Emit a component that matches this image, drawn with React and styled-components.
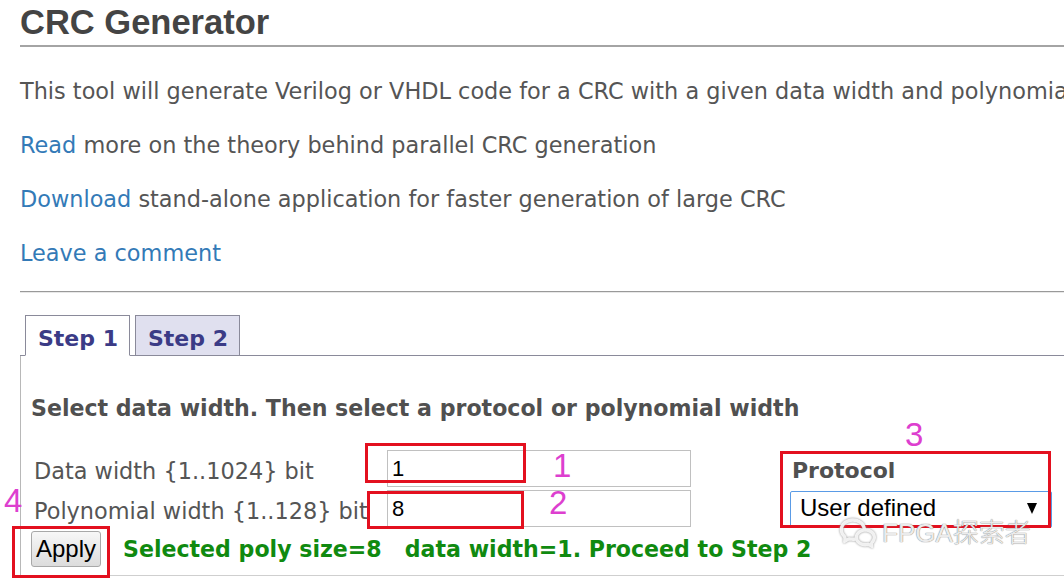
import React from "react";
import styled, { createGlobalStyle } from "styled-components";
import { RiWechatLine } from "react-icons/ri";

const GlobalStyle = createGlobalStyle`
  html, body { margin: 0; padding: 0; background: #fff; overflow: hidden; }
  body { font-family: "DejaVu Sans", Verdana, sans-serif; }
  * { box-sizing: border-box; }
`;

const VERDANA = `"DejaVu Sans", Verdana, sans-serif`;
const ARIAL = `"Liberation Sans", Arial, sans-serif`;

const Page = styled.div`
  position: relative;
  width: 1400px;
  height: 579px;
  padding: 2px 0 0 20px;
  color: #555;
  font-family: ${VERDANA};
`;

const Title = styled.h1`
  margin: 0;
  font: bold 34.5px/40px ${ARIAL};
  color: #444;
  padding: 0 0 3px 0;
  border-bottom: 2px solid #a4a4a4;
`;

const Intro = styled.div`
  display: flex;
  flex-direction: column;
  gap: 30px;
  margin-top: 32px;
`;

const Para = styled.p`
  margin: 0;
  font-size: 22.4px;
  line-height: 24px;
  white-space: nowrap;
  color: #555;
`;

const Link = styled.a`
  color: #337ab7;
  text-decoration: none;
`;

const Rule = styled.hr`
  margin: 26px 0 0 0;
  height: 0;
  border: none;
  border-top: 1px solid #999;
  border-bottom: 1px solid #e8e8e8;
`;

const TabBar = styled.div`
  display: flex;
  gap: 5px;
  margin-top: 22px;
  padding-left: 5px;
  border-bottom: 1px solid #8a8a9a;
`;

const Tab = styled.div`
  height: 41px;
  margin-bottom: -1px;
  padding: 10px 11px 0 12px;
  font: bold 22px/26px ${VERDANA};
  color: #3b3b86;
  border: 1px solid #8a8a9a;
  border-bottom: 1px solid ${(p) => (p.$active ? "#fff" : "#8a8a9a")};
  background: ${(p) => (p.$active ? "#fff" : "#e0e0ef")};
`;

const Panel = styled.div`
  border-left: 1px solid #b8b8b8;
  border-bottom: 1px solid #cfcfcf;
  padding: 39px 0 8px 10px;
`;

const Heading = styled.div`
  font: bold 22.1px/26px ${VERDANA};
  color: #505050;
  white-space: nowrap;
`;

const FormGrid = styled.div`
  display: grid;
  grid-template-columns: 356px 304px 99px 300px;
  grid-auto-rows: 37px;
  row-gap: 3px;
  margin-top: 29px;
  align-items: center;
`;

const Label = styled.div`
  padding: 4px 0 0 3px;
  font-size: 22.4px;
  line-height: 26px;
  color: #555;
  white-space: nowrap;
`;

const TextInput = styled.div`
  height: 37px;
  border: 1px solid #c0c0c0;
  padding-left: 4px;
  display: flex;
  align-items: center;
  font: 22px ${ARIAL};
  color: #000;
`;

const ProtoLabel = styled.div`
  padding: 4px 0 0 2px;
  font: bold 22px/26px ${VERDANA};
  color: #505050;
`;

const SelectBox = styled.div`
  display: flex;
  align-items: center;
  justify-content: space-between;
  width: 262px;
  height: 37px;
  margin-top: 1px;
  border: 1px solid #5a9be6;
  border-radius: 2px;
  padding: 0 14px 2px 9px;
  font: 24px ${ARIAL};
  color: #000;
`;

const Caret = styled.span`
  width: 0;
  height: 0;
  border-left: 5px solid transparent;
  border-right: 5px solid transparent;
  border-top: 11px solid #000;
`;

const ActionRow = styled.div`
  display: flex;
  align-items: center;
  gap: 22px;
  margin-top: 4px;
`;

const Button = styled.button`
  height: 36px;
  width: 70px;
  padding: 0;
  font: 24px ${ARIAL};
  color: #000;
  border: 1px solid #a8a8a8;
  border-radius: 3px;
  background: linear-gradient(#f7f7f7, #dcdcdc);
`;

const Status = styled.div`
  font: bold 22.1px/26px ${VERDANA};
  color: #108a10;
  white-space: pre;
`;

const RedBox = styled.div`
  position: absolute;
  border: 3px solid #e3101f;
  left: ${(p) => p.$x}px;
  top: ${(p) => p.$y}px;
  width: ${(p) => p.$w}px;
  height: ${(p) => p.$h}px;
`;

const Mark = styled.div`
  position: absolute;
  left: ${(p) => p.$x}px;
  top: ${(p) => p.$y}px;
  font: 33px/33px ${ARIAL};
  color: #dd3fcf;
`;

const Watermark = styled.div`
  position: absolute;
  left: 838px;
  top: 513px;
  display: flex;
  align-items: center;
  gap: 4px;
  color: rgba(250, 250, 250, 0.9);
  font: 300 26px/34px ${ARIAL}, "Noto Sans CJK SC", sans-serif;
  text-shadow: 0 0 1px #888, 0 0 1px #888;
  svg {
    filter: drop-shadow(0 0 1px #888);
  }
`;

export default function App() {
  return (
    <>
      <GlobalStyle />
      <Page>
        <Title>CRC Generator</Title>
        <Intro>
          <Para>
            This tool will generate Verilog or VHDL code for a CRC with a given data width and polynomial
          </Para>
          <Para>
            <Link href="#">Read</Link> more on the theory behind parallel CRC generation
          </Para>
          <Para>
            <Link href="#">Download</Link> stand-alone application for faster generation of large CRC
          </Para>
          <Para>
            <Link href="#">Leave a comment</Link>
          </Para>
        </Intro>
        <Rule />
        <TabBar>
          <Tab $active>Step 1</Tab>
          <Tab>Step 2</Tab>
        </TabBar>
        <Panel>
          <Heading>Select data width. Then select a protocol or polynomial width</Heading>
          <FormGrid>
            <Label>Data width {"{1..1024}"} bit</Label>
            <TextInput>1</TextInput>
            <span />
            <ProtoLabel>Protocol</ProtoLabel>
            <Label>Polynomial width {"{1..128}"} bit</Label>
            <TextInput>8</TextInput>
            <span />
            <SelectBox>
              User defined
              <Caret />
            </SelectBox>
          </FormGrid>
          <ActionRow>
            <Button>Apply</Button>
            <Status>{"Selected poly size=8   data width=1. Proceed to Step 2"}</Status>
          </ActionRow>
        </Panel>

        <RedBox $x={365} $y={443} $w={161} $h={40} />
        <RedBox $x={367} $y={491} $w={157} $h={38} />
        <RedBox $x={780} $y={451} $w={271} $h={77} />
        <RedBox $x={12} $y={526} $w={98} $h={52} />
        <Mark $x={553} $y={449}>1</Mark>
        <Mark $x={549} $y={486}>2</Mark>
        <Mark $x={905} $y={418}>3</Mark>
        <Mark $x={4} $y={484}>4</Mark>

        <Watermark>
          <RiWechatLine size={40} />
          <span>FPGA探索者</span>
        </Watermark>
      </Page>
    </>
  );
}
